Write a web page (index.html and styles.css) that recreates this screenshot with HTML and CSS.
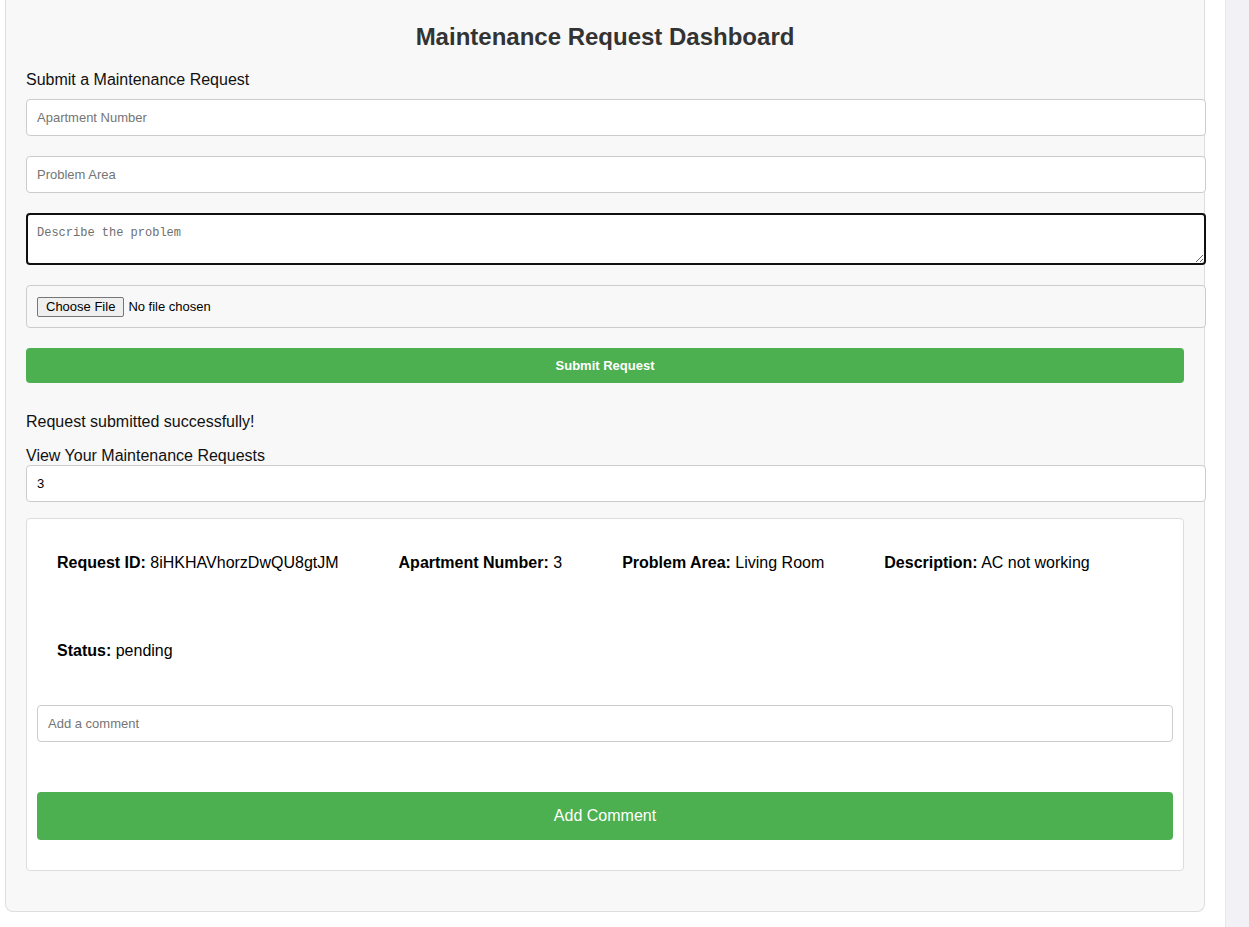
FILE: index.html
```html
<!DOCTYPE html>
<html lang="en">
<head>
<meta charset="utf-8">
<title>Maintenance Request Dashboard</title>
<link rel="stylesheet" href="styles.css">
</head>
<body>
<div class="page">
  <main class="main">
    <div class="container">
      <h1 class="title">Maintenance Request Dashboard</h1>
      <p class="section-label">Submit a Maintenance Request</p>
      <form class="request-form">
        <input class="field" type="text" placeholder="Apartment Number">
        <input class="field" type="text" placeholder="Problem Area">
        <textarea class="field textarea" placeholder="Describe the problem"></textarea>
        <div class="field file-field">
          <span class="file-btn">Choose File</span>
          <span class="file-name">No file chosen</span>
        </div>
        <button type="button" class="btn-submit">Submit Request</button>
      </form>
      <p class="success">Request submitted successfully!</p>
      <p class="section-label view-label">View Your Maintenance Requests</p>
      <input class="field value-field" type="text" value="3">
      <div class="card">
        <div class="details">
          <p class="detail"><strong>Request ID:</strong> 8iHKHAVhorzDwQU8gtJM</p>
          <p class="detail"><strong>Apartment Number:</strong> 3</p>
          <p class="detail"><strong>Problem Area:</strong> Living Room</p>
          <p class="detail"><strong>Description:</strong> AC not working</p>
          <p class="detail"><strong>Status:</strong> pending</p>
        </div>
        <input class="comment" type="text" placeholder="Add a comment">
        <button type="button" class="btn-comment">Add Comment</button>
      </div>
    </div>
  </main>
  <div class="scroll-strip"></div>
</div>
</body>
</html>
```

FILE: styles.css
```css
html, body {
  margin: 0;
  padding: 0;
  height: 927px;
  overflow: hidden;
  background: #ffffff;
  font-family: "Liberation Sans", Arial, sans-serif;
}

.page {
  display: flex;
  height: 927px;
}

.main {
  flex: 1;
  min-width: 0;
}

.scroll-strip {
  width: 23px;
  background: #f1f1f6;
  border-left: 1px solid #e7e7ec;
}

.container {
  box-sizing: border-box;
  width: 1200px;
  margin-left: 5px;
  background: #f8f8f8;
  border: 1px solid #dddddd;
  border-top: 0;
  border-radius: 0 0 8px 8px;
  padding: 23px 20px 20px 20px;
}

.title {
  margin: 0 0 20px 0;
  font-size: 24px;
  line-height: 28px;
  font-weight: bold;
  color: #333333;
  text-align: center;
}

.section-label {
  margin: 0 0 10px 0;
  font-size: 16px;
  line-height: 18px;
  color: #111111;
}

.request-form {
  display: flex;
  flex-direction: column;
  align-items: flex-start;
}

.field {
  display: block;
  box-sizing: border-box;
  width: 1180px;
  height: 37px;
  margin: 0 0 20px 0;
  padding: 10px;
  border: 1px solid #cccccc;
  border-radius: 4px;
  background: #ffffff;
  font-family: "Liberation Sans", Arial, sans-serif;
  font-size: 13px;
  line-height: 15px;
  color: #000000;
  outline: none;
}

.field::placeholder {
  color: #757575;
}

.textarea {
  height: 52px;
  padding: 11px 9px 7px 9px;
  border: 2px solid #101010;
  font-family: "Liberation Mono", "DejaVu Sans Mono", monospace;
  font-size: 12px;
  resize: vertical;
}

.textarea::placeholder {
  color: #6f6f6f;
}

.file-field {
  display: flex;
  align-items: center;
  height: 43px;
  background: #f8f8f8;
  padding: 0 10px;
  gap: 4px;
}

.file-btn {
  box-sizing: border-box;
  height: 20px;
  padding: 0 8px;
  border: 1px solid #767676;
  border-radius: 2px;
  background: #efefef;
  font-size: 13px;
  line-height: 18px;
  color: #000000;
}

.file-name {
  font-size: 13px;
  color: #000000;
}

.btn-submit {
  box-sizing: border-box;
  width: 1158px;
  height: 35px;
  margin: 0;
  padding: 10px;
  border: 0;
  border-radius: 4px;
  background: #4caf50;
  color: #ffffff;
  font-family: "Liberation Sans", Arial, sans-serif;
  font-size: 13px;
  line-height: 15px;
  font-weight: bold;
}

.success {
  margin: 30px 0 16px 0;
  font-size: 16px;
  line-height: 18px;
  color: #111111;
}

.view-label {
  margin-bottom: 0;
}

.value-field {
  margin-bottom: 16px;
}

.card {
  box-sizing: border-box;
  width: 1158px;
  margin-bottom: 20px;
  padding: 10px;
  background: #ffffff;
  border: 1px solid #dddddd;
  border-radius: 4px;
}

.details {
  display: flex;
  flex-wrap: wrap;
  column-gap: 20px;
  row-gap: 22px;
  margin-bottom: 22px;
}

.detail {
  margin: 0;
  padding: 25px 20px 23px 20px;
  font-size: 16px;
  line-height: 18px;
  color: #000000;
}

.detail strong {
  font-weight: bold;
}

.comment {
  display: block;
  box-sizing: border-box;
  width: 100%;
  height: 37px;
  margin: 0 0 50px 0;
  padding: 10px;
  border: 1px solid #cccccc;
  border-radius: 4px;
  font-family: "Liberation Sans", Arial, sans-serif;
  font-size: 13px;
  line-height: 15px;
  outline: none;
}

.comment::placeholder {
  color: #757575;
}

.btn-comment {
  display: block;
  box-sizing: border-box;
  width: 100%;
  height: 48px;
  margin: 0 0 20px 0;
  padding: 15px;
  border: 0;
  border-radius: 4px;
  background: #4caf50;
  color: #ffffff;
  font-family: "Liberation Sans", Arial, sans-serif;
  font-size: 16px;
  line-height: 18px;
}
```
